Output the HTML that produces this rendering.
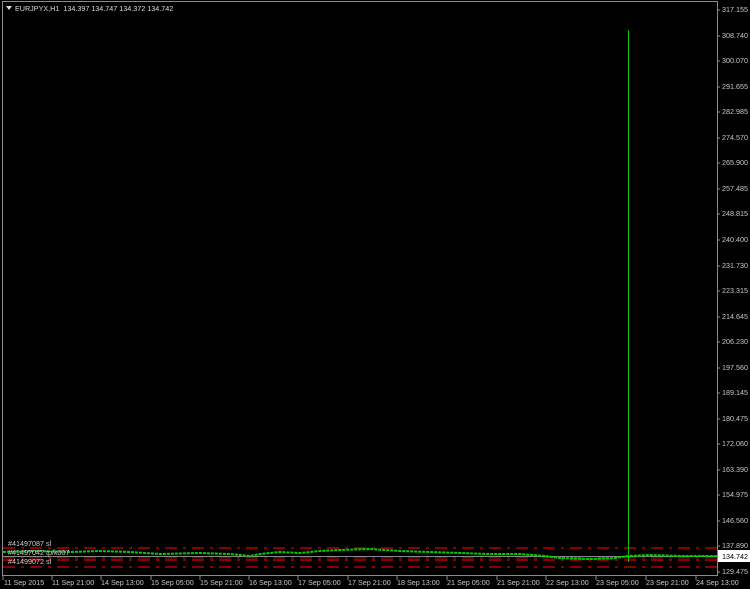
<!DOCTYPE html>
<html><head><meta charset="utf-8"><style>
body{margin:0;background:#000;width:750px;height:589px;overflow:hidden;position:relative;font-family:"Liberation Sans",sans-serif;font-size:7.2px;color:#c8c8c8}
.p{position:absolute;left:722px;white-space:nowrap}
.t{position:absolute;top:578px;white-space:nowrap}
</style></head><body>
<svg width="750" height="589" style="position:absolute;left:0;top:0">
<rect x="2.5" y="1.5" width="715" height="574" fill="none" stroke="#8c8c8c" stroke-width="1"/>
<g stroke="#8a0000" stroke-width="2" stroke-dasharray="12,6,3,6">
<line x1="3" y1="548" x2="717" y2="548"/>
<line x1="3" y1="557.5" x2="717" y2="557.5"/>
<line x1="3" y1="560" x2="717" y2="560"/>
<line x1="3" y1="567" x2="717" y2="567"/>
</g>
<line x1="3" y1="556.5" x2="717" y2="556.5" stroke="#888" stroke-width="1"/>
<polyline fill="none" stroke="#00d000" stroke-width="2" stroke-dasharray="3,1" points="3,552 40,551 70,552 100,551 130,552 160,554 200,553 230,554 250,556 260,554 280,552 300,553 320,551 340,550 370,549 400,551 430,552 460,553 490,554 520,554 545,556 560,558 590,559 615,558 628,556 650,555 680,556 717,556"/>
<line x1="628.5" y1="30" x2="628.5" y2="562" stroke="#00c800" stroke-width="1"/>
<g stroke="#8c8c8c">
<line x1="717" y1="10" x2="720" y2="10"/><line x1="717" y1="36" x2="720" y2="36"/><line x1="717" y1="61" x2="720" y2="61"/><line x1="717" y1="87" x2="720" y2="87"/><line x1="717" y1="112" x2="720" y2="112"/><line x1="717" y1="138" x2="720" y2="138"/><line x1="717" y1="163" x2="720" y2="163"/><line x1="717" y1="189" x2="720" y2="189"/><line x1="717" y1="214" x2="720" y2="214"/><line x1="717" y1="240" x2="720" y2="240"/><line x1="717" y1="266" x2="720" y2="266"/><line x1="717" y1="291" x2="720" y2="291"/><line x1="717" y1="317" x2="720" y2="317"/><line x1="717" y1="342" x2="720" y2="342"/><line x1="717" y1="368" x2="720" y2="368"/><line x1="717" y1="393" x2="720" y2="393"/><line x1="717" y1="419" x2="720" y2="419"/><line x1="717" y1="444" x2="720" y2="444"/><line x1="717" y1="470" x2="720" y2="470"/><line x1="717" y1="495" x2="720" y2="495"/><line x1="717" y1="521" x2="720" y2="521"/><line x1="717" y1="546" x2="720" y2="546"/><line x1="717" y1="572" x2="720" y2="572"/>
</g>
<g stroke="#8c8c8c">
<line x1="3" y1="576" x2="3" y2="580"/><line x1="52" y1="576" x2="52" y2="580"/><line x1="101" y1="576" x2="101" y2="580"/><line x1="151" y1="576" x2="151" y2="580"/><line x1="200" y1="576" x2="200" y2="580"/><line x1="249" y1="576" x2="249" y2="580"/><line x1="298" y1="576" x2="298" y2="580"/><line x1="348" y1="576" x2="348" y2="580"/><line x1="397" y1="576" x2="397" y2="580"/><line x1="447" y1="576" x2="447" y2="580"/><line x1="497" y1="576" x2="497" y2="580"/><line x1="546" y1="576" x2="546" y2="580"/><line x1="596" y1="576" x2="596" y2="580"/><line x1="646" y1="576" x2="646" y2="580"/><line x1="696" y1="576" x2="696" y2="580"/>
</g>
<polygon points="6,6 12,6 9,10" fill="#ddd"/>
<rect x="718" y="550" width="32" height="12" fill="#fff"/>
</svg>
<div style="position:absolute;left:15px;top:4px;color:#ddd">EURJPYX,H1&nbsp; 134.397 134.747 134.372 134.742</div>
<div style="position:absolute;left:8px;top:539px;color:#ccc">#41497087 sl</div>
<div style="position:absolute;left:8px;top:548px;color:#ccc">#41497042 tp/k007</div>
<div style="position:absolute;left:8px;top:557px;color:#ccc">#41499072 sl</div>
<div class="p" style="top:5px">317.155</div><div class="p" style="top:31px">308.740</div><div class="p" style="top:56px">300.070</div><div class="p" style="top:82px">291.655</div><div class="p" style="top:107px">282.985</div><div class="p" style="top:133px">274.570</div><div class="p" style="top:158px">265.900</div><div class="p" style="top:184px">257.485</div><div class="p" style="top:209px">248.815</div><div class="p" style="top:235px">240.400</div><div class="p" style="top:261px">231.730</div><div class="p" style="top:286px">223.315</div><div class="p" style="top:312px">214.645</div><div class="p" style="top:337px">206.230</div><div class="p" style="top:363px">197.560</div><div class="p" style="top:388px">189.145</div><div class="p" style="top:414px">180.475</div><div class="p" style="top:439px">172.060</div><div class="p" style="top:465px">163.390</div><div class="p" style="top:490px">154.975</div><div class="p" style="top:516px">146.560</div><div class="p" style="top:541px">137.890</div><div class="p" style="top:552px;color:#000">134.742</div><div class="p" style="top:567px">129.475</div>
<div class="t" style="left:4px">11 Sep 2015</div><div class="t" style="left:52px">11 Sep 21:00</div><div class="t" style="left:101px">14 Sep 13:00</div><div class="t" style="left:151px">15 Sep 05:00</div><div class="t" style="left:200px">15 Sep 21:00</div><div class="t" style="left:249px">16 Sep 13:00</div><div class="t" style="left:298px">17 Sep 05:00</div><div class="t" style="left:348px">17 Sep 21:00</div><div class="t" style="left:397px">18 Sep 13:00</div><div class="t" style="left:447px">21 Sep 05:00</div><div class="t" style="left:497px">21 Sep 21:00</div><div class="t" style="left:546px">22 Sep 13:00</div><div class="t" style="left:596px">23 Sep 05:00</div><div class="t" style="left:646px">23 Sep 21:00</div><div class="t" style="left:696px">24 Sep 13:00</div>
</body></html>
